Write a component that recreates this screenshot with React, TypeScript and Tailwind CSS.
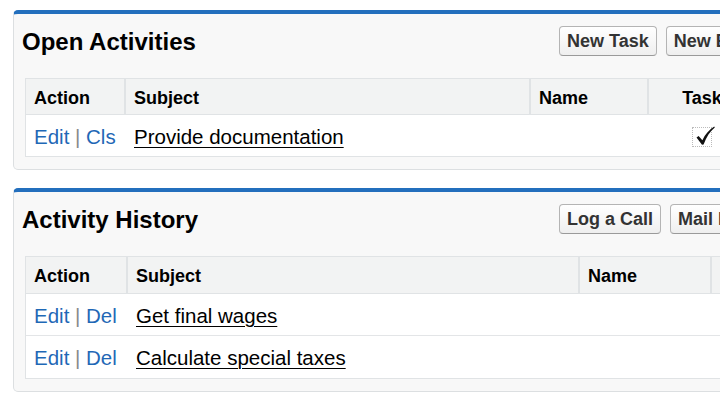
import React from "react";

type Col = { label: string; width: string; center?: boolean; last?: boolean };

type Row = { actions: string[]; subject: string; task?: boolean };

function Check() {
  return (
    <span className="relative inline-block h-[20px] w-[20px] border border-dotted border-[#bbbbbb] align-middle">
      <svg
        viewBox="0 0 22 22"
        className="absolute left-[1px] top-[-3px] h-[22px] w-[22px]"
      >
        <path
          d="M2.5 12.5 L4.6 10.9 L8.4 15.2 C11 9.6 15 4.8 20.2 1.6 L20.8 2.6 C16 6.4 12.4 12 9.6 19.6 L8 19.8 Z"
          fill="#111"
        />
      </svg>
    </span>
  );
}

function Button({ children }: { children: React.ReactNode }) {
  return (
    <button className="h-[30px] shrink-0 whitespace-nowrap rounded-[4px] border border-[#b4b4b4] border-b-[#9a9a9a] bg-gradient-to-b from-[#ffffff] to-[#efefef] px-[7px] text-[18px] font-bold leading-none text-[#333]">
      {children}
    </button>
  );
}

function Panel({
  title,
  buttons,
  cols,
  rows,
  headH,
}: {
  title: string;
  buttons: string[];
  cols: Col[];
  rows: { row: Row; h: string }[];
  headH: string;
}) {
  return (
    <div className="w-[800px] rounded-[5px] border border-[#dcdfe1] border-t-[4px] border-t-[#236fbd] bg-[#f8f8f8] pb-[12px]">
      <div className="mb-[22px] mt-[12px] flex h-[30px] items-center">
        <h2 className="w-[545px] shrink-0 pl-[8px] pt-[1px] text-[24px] font-bold leading-[30px] text-black">
          {title}
        </h2>
        <div className="flex gap-[9px]">
          {buttons.map((b) => (
            <Button key={b}>{b}</Button>
          ))}
        </div>
      </div>
      <div className="ml-[11px] border-x border-t border-[#e0e3e5] bg-white">
        <div className={`flex ${headH} border-b border-[#e0e3e5] bg-[#f2f3f3]`}>
          {cols.map((c) => (
            <div
              key={c.label}
              className={`${c.width} flex shrink-0 items-center px-[8px] pt-[3px] text-[18px] font-bold text-black ${
                c.center ? "justify-center" : ""
              } ${c.last ? "" : "border-r-2 border-[#e0e3e5]"}`}
            >
              {c.label}
            </div>
          ))}
        </div>
        {rows.map(({ row: r, h }, i) => (
          <div
            key={r.subject}
            className={`flex ${h} items-center border-b pt-[3px] ${
              i < rows.length - 1 ? "border-[#e3e5e7]" : "border-[#e0e3e5]"
            }`}
          >
            <div className={`${cols[0].width} shrink-0 px-[8px] text-[20.5px] text-[#1f68b6]`}>
              {r.actions[0]} <span className="text-[#8a8a8a]">|</span> {r.actions[1]}
            </div>
            <div className={`${cols[1].width} shrink-0 px-[8px] text-[20.5px] text-black`}>
              <a className="underline decoration-1 underline-offset-[3px]">{r.subject}</a>
            </div>
            <div className={`${cols[2].width} shrink-0`} />
            {r.task !== undefined && (
              <div className={`${cols[3].width} flex shrink-0 justify-center`}>
                {r.task && <Check />}
              </div>
            )}
          </div>
        ))}
      </div>
    </div>
  );
}

export default function App() {
  return (
    <div
      className="h-[400px] w-[720px] overflow-hidden bg-white pl-[13px] pt-[10px]"
      style={{ fontFamily: '"Liberation Sans", Arial, sans-serif' }}
    >
      <Panel
        title="Open Activities"
        buttons={["New Task", "New Event"]}
        headH="h-[36px]"
        cols={[
          { label: "Action", width: "w-[100px]" },
          { label: "Subject", width: "w-[405px]" },
          { label: "Name", width: "w-[118px]" },
          { label: "Task", width: "w-[106px]", center: true, last: true },
        ]}
        rows={[
          {
            row: { actions: ["Edit", "Cls"], subject: "Provide documentation", task: true },
            h: "h-[42px]",
          },
        ]}
      />
      <div className="h-[18px]" />
      <Panel
        title="Activity History"
        buttons={["Log a Call", "Mail Merge"]}
        headH="h-[37px]"
        cols={[
          { label: "Action", width: "w-[102px]" },
          { label: "Subject", width: "w-[452px]" },
          { label: "Name", width: "w-[132px]" },
          { label: "Date", width: "w-[120px]", last: true },
        ]}
        rows={[
          { row: { actions: ["Edit", "Del"], subject: "Get final wages" }, h: "h-[42px]" },
          {
            row: { actions: ["Edit", "Del"], subject: "Calculate special taxes" },
            h: "h-[43px]",
          },
        ]}
      />
    </div>
  );
}
